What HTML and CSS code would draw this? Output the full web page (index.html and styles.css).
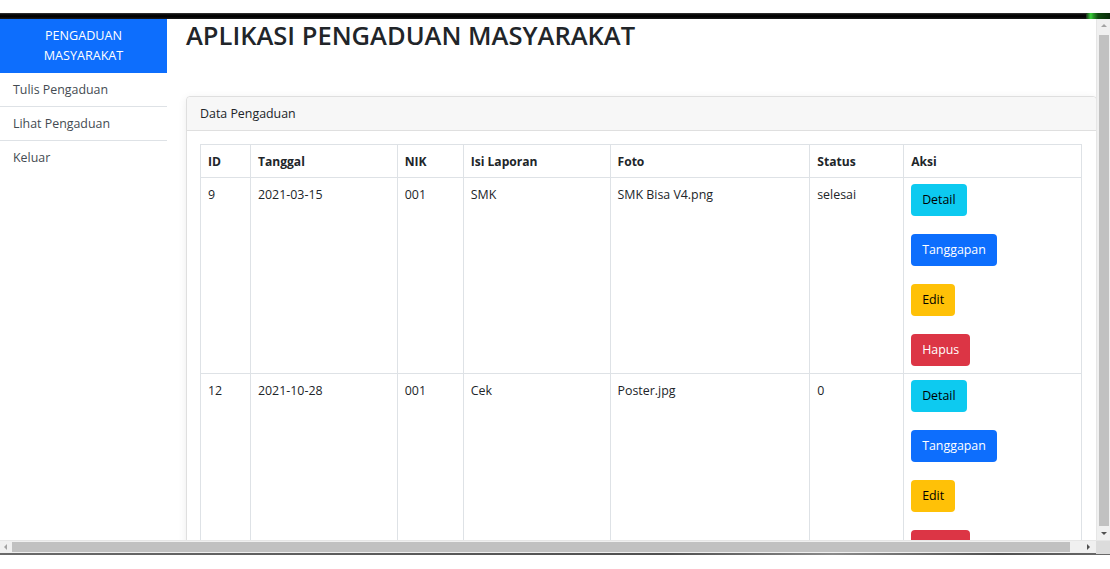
FILE: index.html
```html
<!DOCTYPE html>
<html lang="id">
<head>
<meta charset="utf-8">
<title>Aplikasi Pengaduan Masyarakat</title>
<link rel="stylesheet" href="styles.css">
</head>
<body>
<div class="chrome-top"></div>
<div class="chrome-bar"><span class="glow"></span></div>
<div class="viewport">
  <div class="page">
    <aside class="sidebar">
      <div class="brand">PENGADUAN<br>MASYARAKAT</div>
      <nav class="menu">
        <a class="menu-item" href="#">Tulis Pengaduan</a>
        <a class="menu-item" href="#">Lihat Pengaduan</a>
        <a class="menu-item last" href="#">Keluar</a>
      </nav>
    </aside>
    <main class="main">
      <h1 class="title">APLIKASI PENGADUAN MASYARAKAT</h1>
      <section class="card">
        <div class="card-header">Data Pengaduan</div>
        <div class="card-body">
          <table class="table">
            <colgroup>
              <col class="c-id"><col class="c-tgl"><col class="c-nik"><col class="c-isi"><col class="c-foto"><col class="c-status"><col class="c-aksi">
            </colgroup>
            <thead>
              <tr><th>ID</th><th>Tanggal</th><th>NIK</th><th>Isi Laporan</th><th>Foto</th><th>Status</th><th>Aksi</th></tr>
            </thead>
            <tbody>
              <tr>
                <td>9</td><td>2021-03-15</td><td>001</td><td>SMK</td><td>SMK Bisa V4.png</td><td>selesai</td>
                <td><div class="actions"><a class="btn info" href="#">Detail</a><a class="btn primary" href="#">Tanggapan</a><a class="btn warning" href="#">Edit</a><a class="btn danger" href="#">Hapus</a></div></td>
              </tr>
              <tr>
                <td>12</td><td>2021-10-28</td><td>001</td><td>Cek</td><td>Poster.jpg</td><td>0</td>
                <td><div class="actions"><a class="btn info" href="#">Detail</a><a class="btn primary" href="#">Tanggapan</a><a class="btn warning" href="#">Edit</a><a class="btn danger" href="#">Hapus</a></div></td>
              </tr>
            </tbody>
          </table>
        </div>
      </section>
    </main>
  </div>
  <div class="vscroll">
    <span class="arrow up"></span>
    <span class="vthumb"></span>
    <span class="arrow down"></span>
  </div>
</div>
<div class="hscroll">
  <span class="arrow left"></span>
  <span class="hthumb"></span>
  <span class="arrow right"></span>
  <span class="corner"></span>
</div>
<div class="chrome-bottom"></div>
</body>
</html>
```
FILE: styles.css
```css
* { box-sizing: border-box; }
html, body { margin: 0; padding: 0; background: #fff; }
body {
  width: 1110px;
  height: 569px;
  overflow: hidden;
  font-family: "Open Sans", "Noto Sans", sans-serif;
  font-size: 12.4px;
  color: #212529;
}
.chrome-top { height: 13px; background: #fff; }
.chrome-bar {
  height: 6px;
  background: linear-gradient(to bottom, #3a3a3a 0, #050505 30%, #000 60%, #1b1b1b 100%);
  display: flex;
  justify-content: flex-end;
}
.glow {
  width: 24px;
  background: linear-gradient(to right, #1a2a1a 0, #3ad13a 20%, #2a9a2a 30%, #0f4a0f 50%, #0a2a0a 100%);
}
.viewport {
  height: 521px;
  display: flex;
}
.page {
  width: 1096px;
  height: 521px;
  overflow: hidden;
  display: flex;
}
.sidebar { width: 167px; flex: none; }
.brand {
  background: #0d6efd;
  color: #fff;
  text-align: center;
  height: 54px;
  padding-top: 7px;
  font-size: 12.6px;
  line-height: 20px;
}
.menu { display: flex; flex-direction: column; }
.menu-item {
  display: block;
  color: #444b52;
  text-decoration: none;
  padding: 6px 13px;
  line-height: 21px;
  border-bottom: 1px solid #dee2e6;
  height: 34px;
}
.menu-item.last { border-bottom: 0; }
.main {
  flex: 1;
  padding-left: 19px;
}
.title {
  margin: 0;
  font-size: 25.5px;
  font-weight: 600;
  line-height: 32px;
  color: #212529;
}
.card {
  margin-top: 45px;
  border: 1px solid #dfdfdf;
  border-radius: 4px;
  width: 911px;
  box-shadow: 0 2px 8px rgba(0,0,0,0.08);
  background: #fff;
}
.card-header {
  background: #f7f7f7;
  border-bottom: 1px solid #dfdfdf;
  padding: 6px 13px;
  line-height: 21px;
  height: 34px;
  border-radius: 4px 4px 0 0;
}
.card-body { padding: 13px; }
.table {
  border-collapse: collapse;
  width: 882px;
}
.c-id { width: 50px; }
.c-tgl { width: 147px; }
.c-nik { width: 66px; }
.c-isi { width: 147px; }
.c-foto { width: 200px; }
.c-status { width: 94px; }
.c-aksi { width: 178px; }
.table th, .table td {
  border: 1px solid #dee2e6;
  text-align: left;
  vertical-align: top;
  line-height: 21px;
}
.table th {
  font-weight: 700;
  font-size: 12.1px;
  padding: 6px 7px 5px;
}
.table td { padding: 6px 7px 7px; }
.actions {
  display: flex;
  flex-direction: column;
  align-items: flex-start;
  gap: 18px;
}
.btn {
  display: inline-block;
  height: 32px;
  padding: 5px 10px;
  line-height: 20px;
  border: 1px solid transparent;
  border-radius: 4px;
  text-decoration: none;
  font-size: 12.4px;
}
.btn.info { background: #0dcaf0; color: #000; }
.btn.primary { background: #0d6efd; color: #fff; }
.btn.warning { background: #ffc107; color: #000; }
.btn.danger { background: #dc3545; color: #fff; }
.vscroll {
  width: 14px;
  height: 521px;
  background: #f0f0f0;
  display: flex;
  flex-direction: column;
  align-items: center;
  border-left: 1px solid #e6e6e6;
}
.vthumb {
  width: 10px;
  flex: 1;
  background: #c1c1c1;
  margin: 2px 0;
}
.arrow { flex: none; width: 0; height: 0; }
.arrow.up {
  margin-top: 5px;
  border-left: 3px solid transparent;
  border-right: 3px solid transparent;
  border-bottom: 3px solid #a3a3a3;
  margin-bottom: 6px;
}
.arrow.down {
  margin: 4px 0 5px;
  border-left: 3px solid transparent;
  border-right: 3px solid transparent;
  border-top: 3px solid #505050;
}
.hscroll {
  height: 13px;
  background: #f0f0f0;
  display: flex;
  align-items: center;
  border-top: 1px solid #e6e6e6;
}
.arrow.left {
  margin: 0 5px 0 4px;
  border-top: 3px solid transparent;
  border-bottom: 3px solid transparent;
  border-right: 3px solid #a3a3a3;
}
.hthumb {
  width: 1058px;
  height: 10px;
  background: #c1c1c1;
}
.arrow.right {
  margin-left: 17px;
  border-top: 3px solid transparent;
  border-bottom: 3px solid transparent;
  border-left: 3px solid #505050;
}
.corner {
  margin-left: auto;
  width: 14px;
  height: 13px;
  background: #dcdcdc;
}
.chrome-bottom {
  height: 2px;
  background: linear-gradient(to right, #6a6a6a 0, #505050 60%, #8a8a8a 75%, #505050 90%, #6a6a6a 100%);
}
```
